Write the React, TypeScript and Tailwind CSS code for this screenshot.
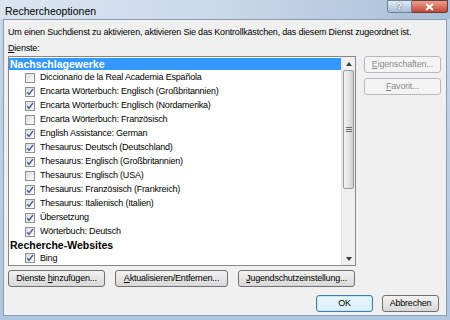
import React from 'react'

const items: { label: string; checked: boolean }[] = [
  { label: 'Diccionario de la Real Academia Española', checked: false },
  { label: 'Encarta Wörterbuch: Englisch (Großbritannien)', checked: true },
  { label: 'Encarta Wörterbuch: Englisch (Nordamerika)', checked: true },
  { label: 'Encarta Wörterbuch: Französisch', checked: false },
  { label: 'English Assistance: German', checked: true },
  { label: 'Thesaurus: Deutsch (Deutschland)', checked: true },
  { label: 'Thesaurus: Englisch (Großbritannien)', checked: true },
  { label: 'Thesaurus: Englisch (USA)', checked: false },
  { label: 'Thesaurus: Französisch (Frankreich)', checked: true },
  { label: 'Thesaurus: Italienisch (Italien)', checked: true },
  { label: 'Übersetzung', checked: true },
  { label: 'Wörterbuch: Deutsch', checked: true },
]

function Box({ checked }: { checked: boolean }) {
  return (
    <div className="w-[10px] h-[10px] border border-[#8f8f8f] bg-gradient-to-br from-[#dcdcdc] to-white flex items-center justify-center shrink-0">
      {checked && (
        <svg width="8" height="8" viewBox="0 0 8 8">
          <path d="M1 4.2 L3 6.3 L7 1" fill="none" stroke="#4a5f97" strokeWidth="1.4" />
        </svg>
      )}
    </div>
  )
}

function Row({ label, checked }: { label: string; checked: boolean }) {
  return (
    <div className="h-[14.5px] flex items-center pl-[16px] gap-[5px]">
      <Box checked={checked} />
      <span className="whitespace-nowrap">{label}</span>
    </div>
  )
}

function Btn({ children, w, disabled, primary }: { children: React.ReactNode; w: string; disabled?: boolean; primary?: boolean }) {
  const base = 'h-[17px] rounded-[3px] border flex items-center justify-center whitespace-nowrap '
  const look = disabled
    ? 'border-[#b5b9bd] bg-[#f4f4f4] text-[#8d8d8d]'
    : primary
    ? 'border-[#3c7fb1] bg-gradient-to-b from-[#eaf6fd] to-[#d9f0fc] text-black shadow-[inset_0_0_0_1px_#c4e5f6]'
    : 'border-[#707070] bg-gradient-to-b from-[#f2f2f2] to-[#d8d8d8] text-black'
  return <div className={base + look + ' ' + w}>{children}</div>
}

export default function App() {
  return (
    <div className="w-[450px] h-[320px] bg-gradient-to-b from-[#c9d8ea] to-[#aec6df] flex flex-col text-[9px] tracking-[-0.2px] leading-none text-black overflow-hidden" style={{ fontFamily: '"Liberation Sans", Arial, sans-serif' }}>
      {/* Title bar */}
      <div className="h-[19px] shrink-0 flex items-start justify-between pl-[5px] pr-[2px] bg-gradient-to-r from-[#dbe5f1] via-[#c8d8ea] to-[#a9bfd8]">
        <span className="text-[10.5px] tracking-normal mt-[6px]">Rechercheoptionen</span>
        <div className="flex">
          <div className="w-[25px] h-[13px] border border-[#6d7f95] rounded-bl-[3px] bg-gradient-to-b from-[#e4ecf6] to-[#a8bdd6] flex items-center justify-center text-white font-bold text-[9px]" style={{ textShadow: '0 0 2px #333' }}>?</div>
          <div className="w-[36px] h-[13px] border border-l-0 border-[#6b3a3a] rounded-br-[3px] bg-gradient-to-b from-[#e8a093] to-[#c4452f] flex items-center justify-center">
            <svg width="9" height="8" viewBox="0 0 9 8">
              <path d="M1 1 L8 7 M8 1 L1 7" stroke="white" strokeWidth="2" />
            </svg>
          </div>
        </div>
      </div>

      {/* Client area */}
      <div className="flex-1 mx-[3px] mb-[4px] bg-[#f0f0f0] border border-[#8b9cb1] flex flex-col px-[4px]">
        <div className="mt-[8px] whitespace-nowrap">Um einen Suchdienst zu aktivieren, aktivieren Sie das Kontrollkästchen, das diesem Dienst zugeordnet ist.</div>
        <div className="mt-[7px]"><span className="underline">D</span>ienste:</div>

        <div className="flex mt-[3px] gap-[8px]">
          {/* List box */}
          <div className="w-[348px] h-[210px] border border-[#828790] bg-white flex overflow-hidden">
            <div className="flex-1 flex flex-col pt-[1px]">
              <div className="h-[12px] bg-[#3399ff] text-white font-bold text-[10.5px] tracking-normal flex items-center pl-[1px]">Nachschlagewerke</div>
              <div className="h-[1px]" />
              {items.map((it, i) => (
                <Row key={i} label={it.label} checked={it.checked} />
              ))}
              <div className="h-[13px] font-bold text-[10.5px] tracking-normal flex items-center pl-[1px]">Recherche-Websites</div>
              <Row label="Bing" checked={true} />
            </div>
            {/* Scrollbar */}
            <div className="w-[14px] bg-[#efefef] border-l border-[#e4e4e4] flex flex-col">
              <div className="h-[13px] flex items-center justify-center">
                <svg width="6" height="4" viewBox="0 0 6 4"><path d="M0 4 L3 0 L6 4 Z" fill="#3c3c3c" /></svg>
              </div>
              <div className="h-[119px] mx-[1px] rounded-[2px] border border-[#9a9a9a] bg-gradient-to-r from-[#f3f3f3] via-[#e4e4e4] to-[#d0d0d0] flex items-center justify-center">
                <svg width="6" height="5" viewBox="0 0 6 5"><path d="M0 0.5 H6 M0 2.5 H6 M0 4.5 H6" stroke="#6b6b6b" strokeWidth="1" /></svg>
              </div>
              <div className="flex-1" />
              <div className="h-[13px] flex items-center justify-center">
                <svg width="6" height="4" viewBox="0 0 6 4"><path d="M0 0 L3 4 L6 0 Z" fill="#3c3c3c" /></svg>
              </div>
            </div>
          </div>

          {/* Right buttons */}
          <div className="flex flex-col gap-[5px]">
            <Btn w="w-[77px]" disabled><span><span className="underline">E</span>igenschaften...</span></Btn>
            <Btn w="w-[77px]" disabled><span><span className="underline">F</span>avorit...</span></Btn>
          </div>
        </div>

        <div className="flex mt-[4px] gap-[10px]">
          <Btn w="w-[97px]"><span>Dienste <span className="underline">h</span>inzufügen...</span></Btn>
          <Btn w="w-[113px]"><span><span className="underline">A</span>ktualisieren/Entfernen...</span></Btn>
          <Btn w="w-[117px]"><span><span className="underline">J</span>ugendschutzeinstellung...</span></Btn>
        </div>

        <div className="flex justify-end mt-[8px] gap-[9px] pr-[3px]">
          <Btn w="w-[57px]" primary>OK</Btn>
          <Btn w="w-[57px]">Abbrechen</Btn>
        </div>
      </div>
    </div>
  )
}
